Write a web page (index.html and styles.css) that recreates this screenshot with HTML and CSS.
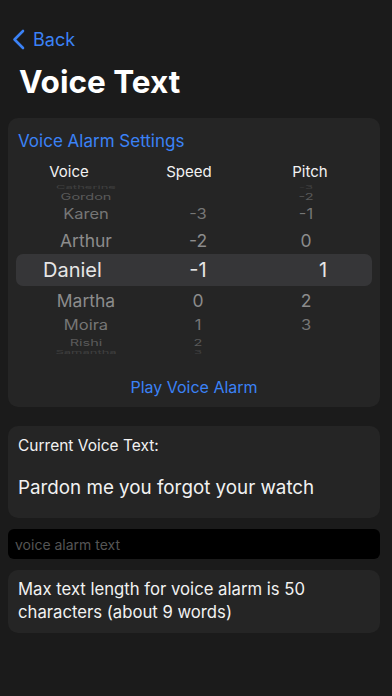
FILE: index.html
```html
<!DOCTYPE html>
<html lang="en">
<head>
    <meta charset="UTF-8">
    <meta name="viewport" content="width=device-width, initial-scale=1.0">
    <title>Voice Text</title>
    <link rel="stylesheet" href="styles.css">
</head>
<body>
    <div class="page">
        <div class="nav">
            <a class="back" href="#">
                <svg width="13" height="21" viewBox="0 0 13 21"><path d="M11 2 L2.5 10.5 L11 19" fill="none" stroke="#3b82f6" stroke-width="2.6" stroke-linecap="round" stroke-linejoin="round"/></svg>
                <span>Back</span>
            </a>
        </div>
        <h1 class="title">Voice Text</h1>

        <div class="card settings">
            <div class="settings-title">Voice Alarm Settings</div>
            <div class="heads">
                <div>Voice</div>
                <div>Speed</div>
                <div class="pitch-head">Pitch</div>
            </div>
            <div class="picker">
                <div class="row r-edge2"><div>Catherine</div><div></div><div>-3</div></div>
                <div class="row r-edge"><div>Gordon</div><div></div><div>-2</div></div>
                <div class="row r-far"><div>Karen</div><div>-3</div><div>-1</div></div>
                <div class="row r-near"><div>Arthur</div><div>-2</div><div>0</div></div>
                <div class="row r-sel"><div class="sel-name">Daniel</div><div>-1</div><div class="sel-pitch">1</div></div>
                <div class="row r-near"><div>Martha</div><div>0</div><div>2</div></div>
                <div class="row r-far"><div>Moira</div><div>1</div><div>3</div></div>
                <div class="row r-edge"><div>Rishi</div><div>2</div><div></div></div>
                <div class="row r-edge2"><div>Samantha</div><div>3</div><div></div></div>
            </div>
            <div class="play">Play Voice Alarm</div>
        </div>

        <div class="card current">
            <div class="current-label">Current Voice Text:</div>
            <div class="current-text">Pardon me you forgot your watch</div>
        </div>

        <input class="voice-input" type="text" placeholder="voice alarm text">

        <div class="card note">Max text length for voice alarm is 50 characters (about 9 words)</div>
    </div>
</body>
</html>
```

FILE: styles.css
```css
body {
    margin: 0;
    background-color: #1b1b1b;
    font-family: Inter, "Noto Sans", sans-serif;
    color: #f2f2f2;
}

.page {
    padding: 0 12px 0 8px;
    height: 696px;
    box-sizing: border-box;
}

.nav {
    padding-top: 29px;
    height: 21px;
}

.back {
    display: flex;
    align-items: center;
    gap: 8px;
    margin-left: 4px;
    color: #3b82f6;
    text-decoration: none;
    font-size: 18px;
    line-height: 21px;
}

.title {
    margin: 12px 0 0 11px;
    font-size: 31.5px;
    line-height: 40px;
    font-weight: 700;
    color: #ffffff;
}

.card {
    background-color: #252525;
    border-radius: 10px;
}

.settings {
    margin-top: 16px;
    padding: 12px 8px 10px;
}

.settings-title {
    padding-left: 2px;
    color: #3b82f6;
    font-size: 17px;
    line-height: 22px;
}

.heads {
    display: grid;
    grid-template-columns: 106px 134px 1fr;
    margin-top: 10px;
    font-size: 15px;
    line-height: 20px;
    color: #f2f2f2;
    text-align: center;
}

.pitch-head {
    padding-right: 8px;
}

.picker {
    margin-top: 2px;
    height: 170px;
}

.row {
    display: grid;
    grid-template-columns: 140px 84px 1fr;
    align-items: center;
    text-align: center;
}

.row div {
    white-space: nowrap;
}

.r-edge2 {
    height: 7px;
    line-height: 7px;
    font-size: 13px;
    color: #404040;
    transform: scaleY(0.4);
}

.r-edge {
    height: 12px;
    line-height: 12px;
    font-size: 14.5px;
    color: #5a5a5a;
    transform: scaleY(0.62);
}

.r-far {
    height: 23px;
    line-height: 23px;
    font-size: 16.5px;
    color: #767676;
    transform: scaleY(0.85);
}

.r-near {
    height: 28px;
    font-size: 17.5px;
    color: #8c8c8c;
}

.r-sel {
    height: 32px;
    font-size: 20px;
    color: #e6e6e6;
    background-color: #363638;
    border-radius: 7px;
}

.sel-name {
    text-align: left;
    padding-left: 27px;
}

.sel-pitch {
    padding-left: 34px;
}

.play {
    margin-top: 23px;
    text-align: center;
    color: #3b82f6;
    font-size: 16px;
    line-height: 20px;
}

.current {
    margin-top: 19px;
    padding: 10px 10px 18px;
}

.current-label {
    font-size: 15.5px;
    line-height: 20px;
}

.current-text {
    margin-top: 20px;
    font-size: 18.8px;
    line-height: 24px;
}

.voice-input {
    display: block;
    width: 100%;
    box-sizing: border-box;
    margin-top: 11px;
    height: 30px;
    padding: 0 7px;
    border: none;
    border-radius: 6px;
    background-color: #000000;
    color: #f2f2f2;
    font-family: Inter, "Noto Sans", sans-serif;
    font-size: 14px;
    outline: none;
}

.voice-input::placeholder {
    color: #555555;
}

.note {
    margin-top: 11px;
    padding: 8px 10px 9px;
    font-size: 16.7px;
    line-height: 23px;
}
```
